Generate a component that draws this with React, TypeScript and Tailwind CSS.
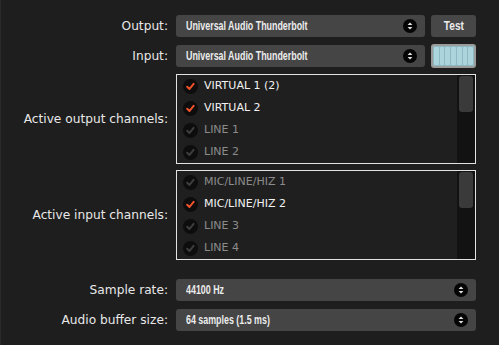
import React from "react";

type Channel = { name: string; on: boolean };

const outputChannels: Channel[] = [
  { name: "VIRTUAL 1 (2)", on: true },
  { name: "VIRTUAL 2", on: true },
  { name: "LINE 1", on: false },
  { name: "LINE 2", on: false },
];

const inputChannels: Channel[] = [
  { name: "MIC/LINE/HIZ 1", on: false },
  { name: "MIC/LINE/HIZ 2", on: true },
  { name: "LINE 3", on: false },
  { name: "LINE 4", on: false },
];

const labelFont = { fontFamily: '"DejaVu Sans", "Liberation Sans", sans-serif' };
const comboFont = { fontFamily: '"Liberation Sans", Arial, sans-serif' };

function UpDown() {
  return (
    <svg width="14" height="14" viewBox="0 0 14 14" className="shrink-0">
      <circle cx="7" cy="7" r="7" fill="#050505" />
      <polygon points="4.6,6 7,3.4 9.4,6" fill="#e6e6e6" />
      <polygon points="4.6,8 7,10.6 9.4,8" fill="#e6e6e6" />
    </svg>
  );
}

function Check({ on }: { on: boolean }) {
  return (
    <svg width="15" height="15" viewBox="0 0 15 15" className="shrink-0">
      <circle cx="7.5" cy="7.5" r="7.5" fill="#0d0d0d" />
      <path
        d="M4.2 7.8 L6.5 10 L10.6 4.8"
        fill="none"
        stroke={on ? "#f0532a" : "#3e3e3e"}
        strokeWidth="2"
        strokeLinecap="round"
        strokeLinejoin="round"
      />
    </svg>
  );
}

function Combo({ value, wide }: { value: string; wide?: boolean }) {
  return (
    <div
      className={`h-[22px] ${wide ? "w-[300px]" : "w-[249px]"} flex items-center justify-between rounded-[3px] bg-[#454545] pl-[10px] pr-[8px]`}
    >
      <span
        className="inline-block origin-left scale-x-[0.74] whitespace-nowrap text-[12px] font-bold text-[#ececec]"
        style={comboFont}
      >
        {value}
      </span>
      <UpDown />
    </div>
  );
}

function Meter() {
  return (
    <div className="h-[24px] w-[45px] rounded-[3px] border-2 border-[#9b9b9b] bg-[#8fb9c4] p-[1px] flex gap-[1px]">
      {[0, 1, 2, 3, 4, 5, 6].map((i) => (
        <div key={i} className="flex-1 rounded-[1px] bg-[#abd4dd]" />
      ))}
    </div>
  );
}

function ChannelList({ items }: { items: Channel[] }) {
  return (
    <div className="w-[300px] h-[90px] border border-[#e2e2e2] bg-[#1f1f1f] flex">
      <div className="flex-1 flex flex-col">
        {items.map((c) => (
          <div key={c.name} className="h-[22px] flex items-center gap-[6px] pl-[6px]">
            <Check on={c.on} />
            <span
              className={`text-[11px] ${c.on ? "text-[#f2f2f2]" : "text-[#8c8c8c]"}`}
              style={labelFont}
            >
              {c.name}
            </span>
          </div>
        ))}
      </div>
      <div className="w-[18px] bg-[#121212] flex justify-center">
        <div className="mt-[1px] h-[36px] w-[14px] rounded-[3px] bg-[#3a3a3a]" />
      </div>
    </div>
  );
}

function Row({ label, children, className = "" }: { label: string; children: React.ReactNode; className?: string }) {
  return (
    <div className={`flex items-center ${className}`}>
      <div className="w-[168px] pr-[1px] text-right text-[12.2px] text-[#e8e8e8]" style={labelFont}>
        {label}
      </div>
      <div className="ml-[7px] flex items-center gap-[6px]">{children}</div>
    </div>
  );
}

export default function App() {
  return (
    <div className="w-[499px] h-[345px] bg-[#1e1e1e] border-l border-[#2a2a2a] pt-[15px]">
      <Row label="Output:">
        <Combo value="Universal Audio Thunderbolt" />
        <button className="h-[22px] w-[45px] rounded-[3px] bg-[#474747] flex items-center justify-center">
          <span
            className="inline-block scale-x-[0.78] text-[13px] font-bold text-[#ececec]"
            style={comboFont}
          >
            Test
          </span>
        </button>
      </Row>
      <Row label="Input:" className="mt-[7px]">
        <Combo value="Universal Audio Thunderbolt" />
        <Meter />
      </Row>
      <Row label="Active output channels:" className="mt-[6px]">
        <ChannelList items={outputChannels} />
      </Row>
      <Row label="Active input channels:" className="mt-[6px]">
        <ChannelList items={inputChannels} />
      </Row>
      <Row label="Sample rate:" className="mt-[19px]">
        <Combo value="44100 Hz" wide />
      </Row>
      <Row label="Audio buffer size:" className="mt-[8px]">
        <Combo value="64 samples (1.5 ms)" wide />
      </Row>
    </div>
  );
}
